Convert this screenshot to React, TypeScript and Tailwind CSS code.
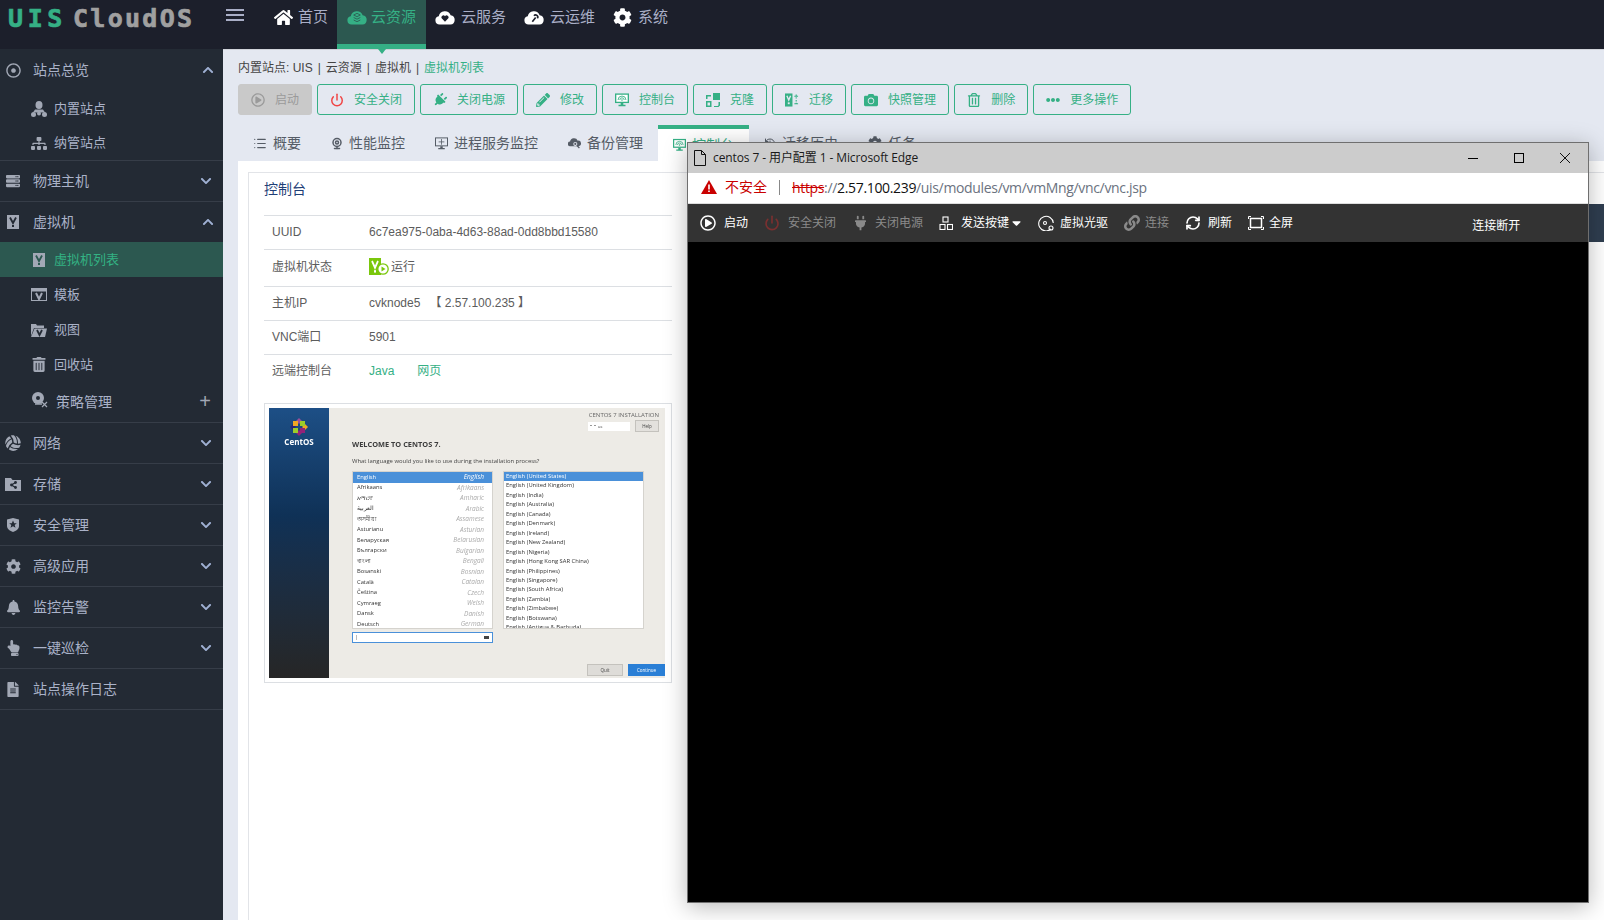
import type { ReactNode } from "react";
import {
  FaCamera, FaChevronDown, FaChevronUp, FaCog, FaFileAlt, FaEllipsisH, FaHome, FaPencilAlt, FaPlug, FaRegDotCircle,
  FaRegPlayCircle, FaRegTrashAlt, FaServer, FaSitemap, FaBell, FaHandPointUp, FaVolleyballBall, FaTrashAlt, FaLink, FaCaretDown,
} from "react-icons/fa";
import { History, List, Power, RefreshCw, Webcam } from "lucide-react";

const font = "font-['Liberation_Sans','Noto_Sans_CJK_SC',sans-serif]";

function Cloud({ className, inner }: { className?: string; inner?: ReactNode }) {
  return (
    <svg viewBox="0 0 24 18" className={className} fill="currentColor">
      <path d="M5.5 17.5a5 5 0 0 1-1-9.9 7.5 7.5 0 0 1 14.3-1.4 5.7 5.7 0 0 1-.3 11.3z" />
      {inner}
    </svg>
  );
}

function VBox({ className, fg = "#232a34" }: { className?: string; fg?: string }) {
  return (
    <svg viewBox="0 0 12 14" className={className} preserveAspectRatio="none">
      <rect width="12" height="14" fill="currentColor" />
      <path d="M3 2.5 6 8l3-5.5" fill="none" stroke={fg} strokeWidth="1.8" />
      <rect x="5" y="10" width="2" height="2" fill={fg} />
    </svg>
  );
}

function WindowV({ className }: { className?: string }) {
  return (
    <svg viewBox="0 0 16 13" className={className} fill="none" stroke="currentColor">
      <rect x=".5" y=".5" width="15" height="12" />
      <rect x="0" y="0" width="16" height="3" fill="currentColor" />
      <path d="M5 5l3 6 3-6" strokeWidth="2" />
    </svg>
  );
}

function FolderV({ className }: { className?: string }) {
  return (
    <svg viewBox="0 0 16 14" className={className}>
      <path d="M0 1h5l1 1.500h7V5H3L0 13z" fill="currentColor" />
      <path d="M3.500 5.500H16L14 14H0z" fill="currentColor" />
      <path d="M6 7l2.500 5L11 7" fill="none" stroke="#232a34" strokeWidth="1.800" />
    </svg>
  );
}

function DiscPolicy({ className }: { className?: string }) {
  return (
    <svg viewBox="0 0 17 16" className={className}>
      <circle cx="7" cy="6" r="6" fill="currentColor" />
      <circle cx="7" cy="6" r="2" fill="#232a34" />
      <path d="M4 12h7" stroke="currentColor" strokeWidth="1.500" />
      <path d="M11 10l5 5M16 10l-5 5" stroke="currentColor" strokeWidth="1.200" />
    </svg>
  );
}

function SiteUser({ className }: { className?: string }) {
  return (
    <svg viewBox="0 0 16 16" className={className} fill="currentColor">
      <ellipse cx="8" cy="4" rx="3.500" ry="4" />
      <path d="M4 8.500h8l2 3H2z" />
      <circle cx="2.500" cy="13.500" r="2.500" />
      <circle cx="13.500" cy="13.500" r="2.500" />
      <circle cx="8" cy="12.500" r="2" />
    </svg>
  );
}

function FolderShare({ className }: { className?: string }) {
  return (
    <svg viewBox="0 0 16 13" className={className}>
      <path d="M0 0h6l1.500 2H16v11H0z" fill="currentColor" />
      <path d="M10.500 4.500 6.500 7l4 2.500" fill="none" stroke="#232a34" strokeWidth="1.300" />
      <circle cx="6.500" cy="7" r="1.400" fill="#232a34" />
      <circle cx="10.500" cy="4.500" r="1.400" fill="#232a34" />
      <circle cx="10.500" cy="9.500" r="1.400" fill="#232a34" />
    </svg>
  );
}

function Shield({ className }: { className?: string }) {
  return (
    <svg viewBox="0 0 12 14" className={className}>
      <path d="M6 0 12 1.500V8c0 3-3 5-6 6-3-1-6-3-6-6V1.500z" fill="currentColor" />
      <path d="M6 2.500 7.200 5.200h2.600L7.700 7l.8 2.700L6 8.200 3.500 9.700 4.300 7 2.200 5.200h2.600z" fill="#232a34" />
    </svg>
  );
}

function Monitor({ className }: { className?: string }) {
  return (
    <svg viewBox="0 0 16 15" className={className}>
      <path d="M0 0h16v11H0z" fill="currentColor" />
      <path d="M1.500 1.500h13v8h-13z" fill="#fff" />
      <path d="M3.500 7.500a4.500 4.500 0 0 1 9 0M5.500 7.500a2.500 2.500 0 0 1 5 0" fill="none" stroke="currentColor" />
      <circle cx="8" cy="7.500" r=".9" fill="currentColor" />
      <path d="M6.500 11h3v2h-3zM4 13h8v1.500H4z" fill="currentColor" />
    </svg>
  );
}

function ServiceMonitor({ className }: { className?: string }) {
  return (
    <svg viewBox="0 0 16 15" className={className}>
      <path d="M0 0h16v11H0z" fill="currentColor" />
      <path d="M1.200 1.200h13.600v8.600H1.200z" fill="#e4e8f1" />
      <path d="M8 2v7M4.500 5.500h7" stroke="currentColor" />
      <path d="M6.500 11h3v2h-3zM4 13h8v1.500H4z" fill="currentColor" />
    </svg>
  );
}

function CloudSearch({ className }: { className?: string }) {
  return (
    <svg viewBox="0 0 16 13" className={className} fill="currentColor">
      <path d="M3 10a3 3 0 0 1-.5-6A5 5 0 0 1 12 3a3.500 3.500 0 0 1 1 7z" />
      <circle cx="9" cy="7" r="2.500" fill="#e4e8f1" />
      <circle cx="9" cy="7" r="1.300" />
      <path d="M11 9l3 3" stroke="currentColor" strokeWidth="1.500" />
    </svg>
  );
}

function Clone({ className }: { className?: string }) {
  return (
    <svg viewBox="0 0 14 14" className={className} fill="currentColor">
      <rect x="7" y="0" width="7" height="7" />
      <path d="M0 2h5v1.500H1.500V6H0zM0 8h5.500v6H0V8zm1.500 1.500v3H4v-3zM8 13h3.500a1.500 1.500 0 0 0 1-1V9H14v3.500l-1.500 1.500H8z" />
    </svg>
  );
}

function Migrate({ className }: { className?: string }) {
  return (
    <svg viewBox="0 0 15 14" className={className}>
      <rect width="8" height="14" fill="currentColor" />
      <path d="M2 2.500 4 7l2-4.500" fill="none" stroke="#e4e8f1" strokeWidth="1.500" />
      <rect x="3" y="9.500" width="2" height="2" fill="#e4e8f1" />
      <path d="M12 1v1.500M12 4v1.500M12 7v1.500M12 10v1.500M10 3h4M10 11h4" stroke="currentColor" strokeWidth="1.200" />
    </svg>
  );
}

function Box({ className }: { className?: string }) {
  return (
    <svg viewBox="0 0 14 14" className={className} fill="none" stroke="currentColor" strokeWidth="1.100">
      <rect x="4" y="1" width="5" height="5" />
      <rect x="1" y="8.500" width="5" height="5" />
      <rect x="8.500" y="8.500" width="5" height="5" />
    </svg>
  );
}

function CdIcon({ className }: { className?: string }) {
  return (
    <svg viewBox="0 0 16 16" className={className} fill="none" stroke="currentColor" strokeWidth="1.100">
      <path d="M13 14A7.300 7.300 0 1 1 15.300 8" />
      <circle cx="7" cy="8" r="1.500" />
      <circle cx="13" cy="13" r="2" />
    </svg>
  );
}

function FullIcon({ className }: { className?: string }) {
  return (
    <svg viewBox="0 0 16 14" className={className} fill="none" stroke="currentColor">
      <rect x="2.500" y="2.500" width="11" height="9" strokeWidth="1.500" />
      <path d="M.500 3V.500H3M13 .500h2.500V3M15.500 11v2.500H13M3 13.500H.500V11" />
    </svg>
  );
}

function CentLogo({ className }: { className?: string }) {
  return (
    <svg viewBox="0 0 18 18" className={className}>
      <path d="M9 0l3 3-3 3-3-3z" fill="#9c4f97" />
      <path d="M9 18l-3-3 3-3 3 3z" fill="#932279" />
      <path d="M0 9l3-3 3 3-3 3z" fill="#262577" />
      <path d="M18 9l-3 3-3-3 3-3z" fill="#efa724" />
      <rect x="3" y="3" width="5" height="5" fill="#efa724" />
      <rect x="10" y="3" width="5" height="5" fill="#9ccd2a" />
      <rect x="3" y="10" width="5" height="5" fill="#9ccd2a" />
      <rect x="10" y="10" width="5" height="5" fill="#932279" />
    </svg>
  );
}

function NavTop({ icon, label, color = "text-[#a9aec6]", gap = "gap-[6px]" }: { icon: ReactNode; label: string; color?: string; gap?: string }) {
  return (
    <div className={`flex items-center ${gap} text-[15px] h-[35px] ${color}`}>
      {icon}
      <span>{label}</span>
    </div>
  );
}

function Header() {
  return (
    <div className="flex h-[49px] shrink-0 bg-[#1c1f2b] relative">
      <div className="w-[223px] pl-[8px] pt-[2px] h-[35px] flex items-center font-['DejaVu_Sans_Mono',monospace] font-bold text-[25px] leading-none [-webkit-text-stroke:0.7px_currentColor]">
        <span className="text-[#35b085] mr-[6px] tracking-[4.600px]">UIS</span>
        <span className="text-[#a0a0a0] tracking-[2.300px]">CloudOS</span>
      </div>
      <div className="w-[18px] ml-[3px] mt-[9px] h-[12px] flex flex-col justify-between">
        <div className="h-[2px] bg-[#a9aec6]" />
        <div className="h-[2px] bg-[#a9aec6]" />
        <div className="h-[2px] bg-[#a9aec6]" />
      </div>
      <div className="ml-[29px] w-[64px]">
        <NavTop icon={<FaHome className="text-white w-[19px] h-[17px] ml-[1px]" />} label="首页" gap="gap-[5px]" />
      </div>
      <div className="w-[89px] h-[49px] bg-[#2c5850] border-b-[5px] border-[#35b085] pl-[10px] relative">
        <NavTop
          color="text-[#35b085]"
          gap="gap-[4px]"
          icon={<Cloud className="w-[20px] h-[15px]" inner={<path d="M12 4l4 2-4 2-4-2zM8 9l4 2 4-2M8 12l4 2 4-2" fill="none" stroke="#2c5850" />} />}
          label="云资源"
        />
        <div className="absolute left-[37px] top-[44px] w-0 h-0 border-x-[8px] border-x-transparent border-t-[10px] border-t-[#35b085]" />
      </div>
      <div className="ml-[9px] w-[89px]">
        <NavTop
          icon={<Cloud className="text-white w-[20px] h-[15px]" inner={<path d="M12 14 8 10a2.300 2.300 0 0 1 4-2.500A2.300 2.300 0 0 1 16 10z" fill="#1c1f2b" />} />}
          label="云服务"
        />
      </div>
      <div className="w-[89px]">
        <NavTop
          icon={<Cloud className="text-white w-[20px] h-[15px]" inner={<path d="M10 14l4-5M12 7a2.500 2.500 0 0 1 4 3" fill="none" stroke="#1c1f2b" strokeWidth="2" />} />}
          label="云运维"
        />
      </div>
      <div>
        <NavTop icon={<FaCog className="text-white w-[19px] h-[19px]" />} label="系统" />
      </div>
    </div>
  );
}

function Group({ icon, label, open, h = "h-[40px]" }: { icon: ReactNode; label: string; open?: boolean; h?: string }) {
  const Chevron = open ? FaChevronUp : FaChevronDown;
  return (
    <div className={`flex items-center ${h} pl-[5px] ${open ? "pr-[9px]" : "pr-[11px]"}`}>
      <span className="w-[16px] flex justify-center text-[#a2a8b5] shrink-0">{icon}</span>
      <span className="ml-[12px] flex-1">{label}</span>
      <Chevron className="w-[12px] h-[12px] text-[#9fb0d3]" />
    </div>
  );
}

function Sub({ icon, label, active, h = "h-[35px]" }: { icon: ReactNode; label: string; active?: boolean; h?: string }) {
  return (
    <div className={`flex items-center ${h} pl-[31px] text-[13px] ${active ? "bg-[#2c5850] text-[#33b283]" : ""}`}>
      <span className="w-[16px] flex justify-center text-[#a2a8b5] shrink-0">{icon}</span>
      <span className="ml-[7px]">{label}</span>
    </div>
  );
}

function Sidebar() {
  const rows: [ReactNode, string][] = [
    [<FaVolleyballBall className="w-[16px] h-[16px]" />, "网络"],
    [<FolderShare className="w-[16px] h-[13px]" />, "存储"],
    [<Shield className="w-[12px] h-[14px]" />, "安全管理"],
    [<FaCog className="w-[15px] h-[15px]" />, "高级应用"],
    [<FaBell className="w-[13px] h-[15px]" />, "监控告警"],
    [<FaHandPointUp className="w-[13px] h-[16px]" />, "一键巡检"],
  ];
  return (
    <div className="w-[223px] shrink-0 bg-[#232a34] text-[#aab2c8] text-[14px]">
      <div className="border-b border-[#363d48]">
        <Group h="h-[42px]" open icon={<FaRegDotCircle className="w-[15px] h-[15px]" />} label="站点总览" />
        <Sub icon={<SiteUser className="w-[16px] h-[16px]" />} label="内置站点" />
        <Sub h="h-[34px]" icon={<FaSitemap className="w-[16px] h-[15px]" />} label="纳管站点" />
      </div>
      <div className="border-b border-[#363d48]">
        <Group icon={<FaServer className="w-[14px] h-[14px]" />} label="物理主机" />
      </div>
      <Group open icon={<VBox className="w-[12px] h-[14px]" />} label="虚拟机" />
      <div className="border-b border-[#363d48]">
        <Sub active icon={<VBox className="w-[12px] h-[14px]" fg="#2c5850" />} label="虚拟机列表" />
        <Sub icon={<WindowV className="w-[16px] h-[13px]" />} label="模板" />
        <Sub icon={<FolderV className="w-[16px] h-[14px]" />} label="视图" />
        <Sub icon={<FaTrashAlt className="w-[14px] h-[15px]" />} label="回收站" />
        <div className="flex h-[40px] pl-[31px] pr-[12px] items-center">
          <DiscPolicy className="w-[17px] h-[16px] text-[#a2a8b5] -mt-[5px]" />
          <span className="ml-[8px] flex-1">策略管理</span>
          <span className="text-[#a2a8b5] text-[20px] leading-none -mt-[2px]">+</span>
        </div>
      </div>
      {rows.map(([icon, label]) => (
        <div key={label} className="border-b border-[#363d48]">
          <Group icon={icon} label={label} />
        </div>
      ))}
      <div className="border-b border-[#363d48] flex items-center h-[41px] pl-[7px]">
        <FaFileAlt className="w-[12px] h-[15px] text-[#a2a8b5]" />
        <span className="ml-[14px]">站点操作日志</span>
      </div>
    </div>
  );
}

function ActionButton({ icon, label, disabled }: { icon: ReactNode; label: string; disabled?: boolean }) {
  return (
    <div
      className={`flex items-center gap-[10px] h-[31px] px-[12px] rounded-[3px] border text-[12px] ${
        disabled ? "bg-[#c9c9c9] border-[#c9c9c9] text-[#9a9a9a]" : "border-[#35b085] text-[#35b085]"
      }`}
    >
      <span className="w-[14px] flex justify-center shrink-0">{icon}</span>
      <span>{label}</span>
    </div>
  );
}

function Tab({ icon, label, w, active }: { icon: ReactNode; label: string; w: string; active?: boolean }) {
  return (
    <div className={`flex items-center gap-[6px] h-[36px] px-[15px] text-[14px] ${w} ${active ? "bg-white border-t-4 border-[#35b085] text-[#35b085]" : "text-[#555c66]"}`}>
      {icon}
      <span className="whitespace-nowrap">{label}</span>
    </div>
  );
}

function InfoRow({ label, h, children }: { label: string; h: string; children: ReactNode }) {
  return (
    <div className={`flex items-center ${h} pl-[8px] pb-[2px] border-t border-[#dcdfe3] text-[12px] text-[#5c5c5c]`}>
      <span className="w-[97px] shrink-0">{label}</span>
      {children}
    </div>
  );
}

const languages = [
  ["English", "English"], ["Afrikaans", "Afrikaans"], ["አማርኛ", "Amharic"], ["العربية", "Arabic"], ["অসমীয়া", "Assamese"],
  ["Asturianu", "Asturian"], ["Беларуская", "Belarusian"], ["Български", "Bulgarian"], ["বাংলা", "Bengali"], ["Bosanski", "Bosnian"],
  ["Català", "Catalan"], ["Čeština", "Czech"], ["Cymraeg", "Welsh"], ["Dansk", "Danish"], ["Deutsch", "German"],
];
const locales = [
  "United States", "United Kingdom", "India", "Australia", "Canada", "Denmark", "Ireland", "New Zealand", "Nigeria",
  "Hong Kong SAR China", "Philippines", "Singapore", "South Africa", "Zambia", "Zimbabwe", "Botswana", "Antigua & Barbuda",
];

function Thumbnail() {
  return (
    <div className="border border-[#dcdfe3] p-[4px] h-[280px] w-[408px] mt-[15px]">
      <div className="flex h-[270px] w-[396px] overflow-hidden blur-[0.4px] font-['Open_Sans','Noto_Sans_CJK_SC',sans-serif]">
        <div className="w-[60px] shrink-0 bg-gradient-to-b from-[#1d4f86] via-[#0f3156] via-40% to-[#262626] flex flex-col items-center pt-[10px]">
          <CentLogo className="w-[18px] h-[18px]" />
          <span className="text-white text-[8px] font-bold">CentOS</span>
        </div>
        <div className="flex-1 bg-[#edebe6] text-[#444]">
          <div className="h-[12px] pt-[3px] text-right text-[6px] pr-[6px] text-[#666] leading-[9px]">CENTOS 7 INSTALLATION</div>
          <div className="h-[12px] flex justify-end pr-[6px] gap-[5px]">
            <div className="w-[42px] h-[9px] mt-[2px] bg-white text-[4px] pl-[1px] leading-[9px]">▪▪ us</div>
            <div className="w-[24px] h-[12px] bg-[#e3e1dd] border border-[#c4c2bd] text-[4.500px] text-center leading-[10px]">Help</div>
          </div>
          <div className="pl-[23px]">
            <div className="h-[25px] flex items-center text-[7.400px] font-bold text-[#3d3d3d]">WELCOME TO CENTOS 7.</div>
            <div className="h-[8px] text-[5.900px] leading-[8px] whitespace-nowrap">What language would you like to use during the installation process?</div>
            <div className="flex gap-[10px] mt-[6px]">
              <div className="w-[141px] h-[158px] bg-white overflow-hidden border border-[#d5d3ce]">
                {languages.map(([name, en], i) => (
                  <div key={en} className={`flex justify-between items-center h-[10.500px] pl-[4px] pr-[8px] text-[5.800px] ${i === 0 ? "bg-[#4a90d9] text-white" : "text-[#333]"}`}>
                    <span>{name}</span>
                    <span className={`italic text-[6.500px] ${i === 0 ? "" : "text-[#aaa]"}`}>{en}</span>
                  </div>
                ))}
              </div>
              <div className="w-[141px] h-[158px] bg-white overflow-hidden border border-[#d5d3ce]">
                {locales.map((l, i) => (
                  <div key={l} className={`h-[9.460px] px-[2px] text-[5.800px] leading-[9.460px] whitespace-nowrap ${i === 0 ? "bg-[#4a90d9] text-white" : "text-[#333]"}`}>
                    English ({l})
                  </div>
                ))}
              </div>
            </div>
            <div className="w-[141px] h-[11px] mt-[3px] bg-white border border-[#4a90d9] text-[5px] pl-[2px] flex justify-between pr-[3px] items-center">
              <span>|</span>
              <span className="w-[5px] h-[3px] bg-[#444]" />
            </div>
            <div className="flex justify-end gap-[5px] mt-[21px]">
              <div className="w-[36px] h-[12px] bg-[#dedcd8] border border-[#c4c2bd] text-[4.500px] text-center leading-[10px]">Quit</div>
              <div className="w-[37px] h-[12px] bg-[#2a7fd6] text-white text-[4.500px] text-center leading-[12px]">Continue</div>
            </div>
          </div>
        </div>
      </div>
    </div>
  );
}

function ToolItem({ icon, label, dim, gap = "gap-[8px]" }: { icon: ReactNode; label: string; dim?: boolean; gap?: string }) {
  return (
    <div className={`flex items-center ${gap} text-[12px] ${dim ? "text-[#8a8a8a]" : "text-white"}`}>
      {icon}
      <span className="whitespace-nowrap">{label}</span>
    </div>
  );
}

function VncWindow() {
  return (
    <div className={`absolute left-[687px] top-[142px] w-[902px] h-[761px] border border-[#6f6f6f] bg-black shadow-[0_4px_22px_rgba(0,0,0,0.28)] flex flex-col ${font}`}>
      <div className="h-[30px] shrink-0 bg-[#cccccc] flex items-center pl-[6px] text-[#1a1a1a]">
        <svg viewBox="0 0 12 16" className="w-[12px] h-[16px]" fill="none" stroke="#111" strokeWidth="1">
          <path d="M.500.500h7l4 4v11h-11zM7.500.500v4h4" />
        </svg>
        <span className="ml-[7px] text-[12px] flex-1 font-['Open_Sans','Noto_Sans_CJK_SC',sans-serif] tracking-[-0.1px]">centos 7 - 用户配置 1 - Microsoft Edge</span>
        <div className="w-[46px] flex justify-center"><div className="w-[10px] h-px bg-black" /></div>
        <div className="w-[46px] flex justify-center"><div className="w-[10px] h-[10px] border border-black" /></div>
        <div className="w-[46px] flex justify-center">
          <svg viewBox="0 0 10 10" className="w-[10px] h-[10px]" stroke="#111"><path d="M0 0l10 10M10 0 0 10" /></svg>
        </div>
      </div>
      <div className="h-[31px] shrink-0 bg-white flex items-center pl-[13px] pb-[2px] border-b border-[#ddd]">
        <svg viewBox="0 0 16 14" className="w-[16px] h-[14px]">
          <path d="M8 0l8 14H0z" fill="#c90000" />
          <path d="M7.200 4.500h1.600v5H7.200zM7.200 10.500h1.600v1.600H7.200z" fill="#fff" />
        </svg>
        <span className="ml-[8px] text-[14px] text-[#c90000]">不安全</span>
        <div className="ml-[12px] w-px h-[15px] bg-[#888]" />
        <span className="ml-[12px] text-[14px] font-['Open_Sans',sans-serif] tracking-[-0.34px]">
          <span className="text-[#c90000] line-through">https</span>
          <span className="text-[#6b7280]">://</span>
          <span className="text-[#111]">2.57.100.239</span>
          <span className="text-[#6b7280]">/uis/modules/vm/vmMng/vnc/vnc.jsp</span>
        </span>
      </div>
      <div className="h-[38px] shrink-0 bg-[#333333] flex items-center pl-[12px] gap-[16px] relative">
        <ToolItem icon={<FaRegPlayCircle className="w-[16px] h-[16px]" />} label="启动" />
        <ToolItem dim icon={<Power className="w-[16px] h-[16px] text-[#7a3030]" strokeWidth={2.5} />} label="安全关闭" />
        <ToolItem dim gap="gap-[9px]" icon={<FaPlug className="w-[11px] h-[16px] ml-[3px]" />} label="关闭电源" />
        <ToolItem icon={<Box className="w-[14px] h-[14px]" />} label="发送按键" />
        <FaCaretDown className="w-[11px] h-[14px] text-white -ml-[14px]" />
        <ToolItem gap="gap-[6px]" icon={<CdIcon className="w-[16px] h-[16px]" />} label="虚拟光驱" />
        <ToolItem dim gap="gap-[5px]" icon={<FaLink className="w-[16px] h-[16px]" />} label="连接" />
        <ToolItem gap="gap-[7px]" icon={<RefreshCw className="w-[16px] h-[16px]" strokeWidth={2.500} />} label="刷新" />
        <ToolItem gap="gap-[5px]" icon={<FullIcon className="w-[16px] h-[14px]" />} label="全屏" />
        <span className="ml-[163px] mt-[5px] text-[12px] text-white">连接断开</span>
      </div>
      <div className="flex-1 bg-black" />
    </div>
  );
}

export default function App() {
  const green = "w-[14px] h-[14px]";
  return (
    <div className={`relative w-[1604px] h-[920px] overflow-hidden flex flex-col ${font}`}>
      <Header />
      <div className="flex flex-1 min-h-0">
        <Sidebar />
        <div className="flex-1 bg-[#e4e8f1] pl-[15px] flex flex-col min-w-0 border-t border-[#d0d3da]">
          <div className="h-[34px] pt-[10px] text-[12px] leading-[17px] text-[#444] whitespace-nowrap">
            内置站点: UIS<span className="mx-[5px]">|</span>云资源<span className="mx-[5px]">|</span>虚拟机<span className="mx-[5px]">|</span>
            <span className="text-[#35b085]">虚拟机列表</span>
          </div>
          <div className="flex gap-[5px]">
            <ActionButton disabled icon={<FaRegPlayCircle className={green} />} label="启动" />
            <ActionButton icon={<Power className="w-[16px] h-[16px] text-[#f04444]" strokeWidth={2.500} />} label="安全关闭" />
            <ActionButton icon={<FaPlug className={`${green} rotate-45`} />} label="关闭电源" />
            <ActionButton icon={<FaPencilAlt className={green} />} label="修改" />
            <ActionButton icon={<Monitor className="w-[15px] h-[14px]" />} label="控制台" />
            <ActionButton icon={<Clone className={green} />} label="克隆" />
            <ActionButton icon={<Migrate className={green} />} label="迁移" />
            <ActionButton icon={<FaCamera className={green} />} label="快照管理" />
            <ActionButton icon={<FaRegTrashAlt className={green} />} label="删除" />
            <ActionButton icon={<FaEllipsisH className={green} />} label="更多操作" />
          </div>
          <div className="flex mt-[10px]">
            <Tab w="w-[78px]" icon={<List className="w-[15px] h-[15px]" />} label="概要" />
            <Tab w="w-[104px]" icon={<Webcam className="w-[14px] h-[15px]" strokeWidth={3} />} label="性能监控" />
            <Tab w="w-[133px]" icon={<ServiceMonitor className="w-[15px] h-[15px]" />} label="进程服务监控" />
            <Tab w="w-[105px]" icon={<CloudSearch className="w-[15px] h-[13px]" />} label="备份管理" />
            <Tab active w="w-[91px]" icon={<Monitor className="w-[15px] h-[14px]" />} label="控制台" />
            <Tab w="w-[104px]" icon={<History className="w-[15px] h-[15px]" />} label="迁移历史" />
            <Tab w="w-[80px]" icon={<FaCog className="w-[14px] h-[14px]" />} label="任务" />
          </div>
          <div className="flex-1 bg-white pl-[10px] pt-[11px] min-h-0">
            <div className="h-full border-l border-t border-[#e2e4e8] flex pl-[15px]">
              <div className="w-[408px] shrink-0">
                <div className="h-[42px] pt-[8px] text-[14px] leading-[16px] text-[#1f3f77]">控制台</div>
                <InfoRow label="UUID" h="h-[34px]">
                  <span>6c7ea975-0aba-4d63-88ad-0dd8bbd15580</span>
                </InfoRow>
                <InfoRow label="虚拟机状态" h="h-[37px]">
                  <span className="flex items-center text-[#5c5c5c]">
                    <span className="relative w-[20px] h-[18px]">
                      <VBox className="w-[12px] h-[17px] text-[#7ac70c]" fg="#fff" />
                      <svg viewBox="0 0 12 12" className="absolute left-[8px] top-[5px] w-[12px] h-[12px]">
                        <circle cx="6" cy="6" r="5.200" fill="#fff" stroke="#7ac70c" strokeWidth="1.300" />
                        <path d="M4.500 3.500 8.500 6l-4 2.500z" fill="#7ac70c" />
                      </svg>
                    </span>
                    <span className="ml-[2px]">运行</span>
                  </span>
                </InfoRow>
                <InfoRow label="主机IP" h="h-[34px]">
                  <span>cvknode5</span>
                  <span className="ml-[9px]">【 2.57.100.235 】</span>
                </InfoRow>
                <InfoRow label="VNC端口" h="h-[34px]">
                  <span>5901</span>
                </InfoRow>
                <InfoRow label="远端控制台" h="h-[34px]">
                  <span className="text-[#35b085]">Java</span>
                  <span className="ml-[23px] text-[#35b085]">网页</span>
                </InfoRow>
                <Thumbnail />
              </div>
              <div className="flex-1 ml-[16px] pt-[31px]">
                <div className="h-[38px] bg-[#2f3e50]" />
              </div>
            </div>
          </div>
        </div>
      </div>
      <VncWindow />
    </div>
  );
}
